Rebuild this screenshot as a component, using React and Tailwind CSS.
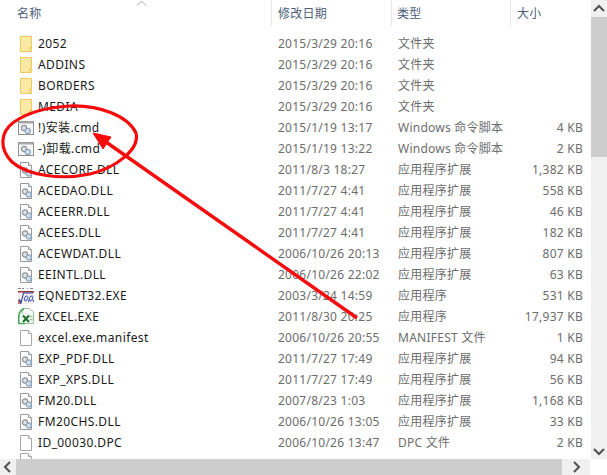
const rows = [
  ["folder","2052","2015/3/29 20:16","文件夹",""],
  ["folder","ADDINS","2015/3/29 20:16","文件夹",""],
  ["folder","BORDERS","2015/3/29 20:16","文件夹",""],
  ["folder","MEDIA","2015/3/29 20:16","文件夹",""],
  ["cmd","!)安装.cmd","2015/1/19 13:17","Windows 命令脚本","4 KB"],
  ["cmd","-)卸载.cmd","2015/1/19 13:22","Windows 命令脚本","2 KB"],
  ["dll","ACECORE.DLL","2011/8/3 18:27","应用程序扩展","1,382 KB"],
  ["dll","ACEDAO.DLL","2011/7/27 4:41","应用程序扩展","558 KB"],
  ["dll","ACEERR.DLL","2011/7/27 4:41","应用程序扩展","46 KB"],
  ["dll","ACEES.DLL","2011/7/27 4:41","应用程序扩展","182 KB"],
  ["dll","ACEWDAT.DLL","2006/10/26 20:13","应用程序扩展","807 KB"],
  ["dll","EEINTL.DLL","2006/10/26 22:02","应用程序扩展","63 KB"],
  ["eq","EQNEDT32.EXE","2003/3/24 14:59","应用程序","531 KB"],
  ["xl","EXCEL.EXE","2011/8/30 20:25","应用程序","17,937 KB"],
  ["file","excel.exe.manifest","2006/10/26 20:55","MANIFEST 文件","1 KB"],
  ["dll","EXP_PDF.DLL","2011/7/27 17:49","应用程序扩展","94 KB"],
  ["dll","EXP_XPS.DLL","2011/7/27 17:49","应用程序扩展","56 KB"],
  ["dll","FM20.DLL","2007/8/23 1:03","应用程序扩展","1,168 KB"],
  ["dll","FM20CHS.DLL","2006/10/26 13:05","应用程序扩展","33 KB"],
  ["file","ID_00030.DPC","2006/10/26 13:47","DPC 文件","2 KB"],
];

function Gears({x=0,y=0}) {
  return <g transform={`translate(${x} ${y})`}>
    <circle cx="3.5" cy="3.5" r="2.6" fill="#dfe3e6" stroke="#8a9199" strokeWidth="1.2"/>
    <circle cx="7.2" cy="6.5" r="2.6" fill="#cfe0ef" stroke="#8fa5bb" strokeWidth="1.2"/>
  </g>;
}

function Icon({kind}) {
  if (kind === "folder") return (
    <svg width="16" height="16" viewBox="0 0 16 16" className="shrink-0">
      <path d="M2.5 0.5H13.5V15.5H2.5Z" fill="#fbe9a6" stroke="#eecb5d"/>
      <path d="M11.5 15.5V11.5H13.5" fill="none" stroke="#eecb5d"/>
    </svg>
  );
  if (kind === "cmd") return (
    <svg width="18" height="16" viewBox="0 0 18 16" className="shrink-0">
      <rect x="0.5" y="1.5" width="15" height="13" fill="#f7f7f7" stroke="#8f8f8f"/>
      <rect x="0.5" y="1.5" width="15" height="2" fill="#a9a9a9" stroke="none"/>
      <Gears x="2.5" y="4.5"/>
    </svg>
  );
  if (kind === "dll") return (
    <svg width="16" height="16" viewBox="0 0 16 16" className="shrink-0">
      <path d="M2.5 0.5H10.5L13.5 3.5V15.5H2.5Z" fill="#fff" stroke="#9a9a9a"/>
      <path d="M10.5 0.5V3.5H13.5" fill="#eee" stroke="#9a9a9a"/>
      <Gears x="3.5" y="5"/>
    </svg>
  );
  if (kind === "file") return (
    <svg width="16" height="16" viewBox="0 0 16 16" className="shrink-0">
      <path d="M2.5 0.5H10.5L13.5 3.5V15.5H2.5Z" fill="#fff" stroke="#a8a8a8"/>
      <path d="M10.5 0.5V3.5H13.5" fill="#f2f2f2" stroke="#a8a8a8"/>
    </svg>
  );
  if (kind === "eq") return (
    <svg width="16" height="16" viewBox="0 0 16 16" className="shrink-0">
      <path d="M0 0.5H3M4 0.5H6M9 0.5H10M12 0.5H15" stroke="#888" />
      <rect x="0" y="3" width="16" height="13" fill="#f5eeee"/>
      <rect x="0" y="3" width="16" height="1.5" fill="#a03030"/>
      <rect x="0" y="12" width="3" height="4" fill="#c07070"/>
      <path d="M1 11L3 15L5.5 5H15" fill="none" stroke="#2a4aa8" strokeWidth="1.1"/>
      <path d="M9.5 8C7 7.5 6.3 10 6.6 12C7.2 14.5 9.5 12 10 8.5M10 11.5L10.8 14M14.5 8C12 7.5 11.3 10 11.6 12C12.2 14.5 14.5 12 15 8.5M15 11.5L15.6 14" fill="none" stroke="#2a4aa8"/>
    </svg>
  );
  return (
    <svg width="16" height="17" viewBox="0 0 16 17" className="shrink-0">
      <path d="M4 0.5H11L15.5 4V15.5H4Z" fill="#f8fbf6" stroke="#9dbf9f"/>
      <path d="M6 1C1.5 2 0 8 1 15.5H7" fill="none" stroke="#46a552" strokeWidth="1.6"/>
      <rect x="3" y="6" width="12" height="9" fill="#eef5ec"/>
      <path d="M5 7.5L11 14M11 7.5L5 14" stroke="#1d6f33" strokeWidth="2"/>
      <rect x="12" y="8" width="2.5" height="1.2" fill="#8cc096"/>
      <rect x="12" y="11" width="2.5" height="1.2" fill="#8cc096"/>
    </svg>
  );
}

function Chevron({d}) {
  return <svg width="16" height="16" viewBox="0 0 16 16"><path d={d} fill="none" stroke="#505050" strokeWidth="2"/></svg>;
}

export default function App() {
  return (
    <div className="relative w-[607px] h-[475px] overflow-hidden bg-white flex flex-col font-['Noto_Sans','Noto_Sans_CJK_SC',sans-serif] text-[12px] leading-[21px] tracking-[0.25px]">
      <div className="flex flex-1 min-h-0">
        <div className="flex-1 min-w-0 overflow-hidden">
          <div className="relative flex h-[26px] text-[#4c607a] leading-[26px]">
            <svg width="12" height="6" viewBox="0 0 12 6" className="absolute left-[136px] top-0"><path d="M1 5.5L5.5 1L10 5.5" fill="none" stroke="#a3a3a3"/></svg>
            <div className="w-[272px] pl-[17px] pt-[1px] border-r border-[#e5e5e5]">名称</div>
            <div className="w-[120px] pl-[6px] pt-[1px] border-r border-[#e5e5e5]">修改日期</div>
            <div className="w-[119px] pl-[5px] pt-[1px] border-r border-[#e5e5e5]">类型</div>
            <div className="flex-1 pl-[6px] pt-[1px]">大小</div>
          </div>
          <div className="pt-[7px]">
            {rows.map((r) => (
              <div key={r[1]} className="flex h-[21px] items-center">
                <div className="w-[272px] flex items-center pl-[18px] text-[#1a1a1a] tracking-[0.4px]">
                  <span className="w-[20px] flex"><Icon kind={r[0]}/></span>
                  <span>{r[1]}</span>
                </div>
                <div className="w-[120px] pl-[6px] text-[#6d6d6d]">{r[2]}</div>
                <div className="w-[119px] pl-[6px] text-[#6d6d6d]">{r[3]}</div>
                <div className="w-[72px] text-right text-[#6d6d6d]">{r[4]}</div>
              </div>
            ))}
            <div className="flex h-[21px] pl-[18px]"><Icon kind="file"/></div>
          </div>
        </div>
        <div className="w-[16px] flex flex-col bg-[#f0f0f0]">
          <div className="h-[17px] flex items-center justify-center"><Chevron d="M3 10L8 5L13 10"/></div>
          <div className="h-[140px] bg-[#cdcdcd]"></div>
          <div className="flex-1"></div>
          <div className="h-[17px] flex items-center justify-center"><Chevron d="M3 6L8 11L13 6"/></div>
        </div>
      </div>
      <div className="h-[16px] flex shrink-0">
        <div className="w-[590px] flex bg-[#f0f0f0]">
          <div className="w-[16px] flex items-center justify-center"><Chevron d="M10 3L5 8L10 13"/></div>
          <div className="w-[546px] bg-[#cdcdcd]"></div>
          <div className="flex-1 flex items-center justify-center"><Chevron d="M6 3L11 8L6 13"/></div>
        </div>
      </div>
      <svg width="607" height="475" viewBox="0 0 607 475" className="absolute inset-0 pointer-events-none">
        <path d="M70 106C100 105 128 116 136 133C140 150 115 168 90 174C62 180 28 176 12 162C-1 149 0 132 14 122C30 111 50 107 70 106" fill="none" stroke="#f50b0b" strokeWidth="3.2"/>
        <path d="M357 318L106 142" fill="none" stroke="#f50b0b" strokeWidth="3.4"/>
        <path d="M93 133L111 137L103 149Z" fill="#f50b0b" stroke="#f50b0b" strokeWidth="1"/>
      </svg>
    </div>
  );
}
